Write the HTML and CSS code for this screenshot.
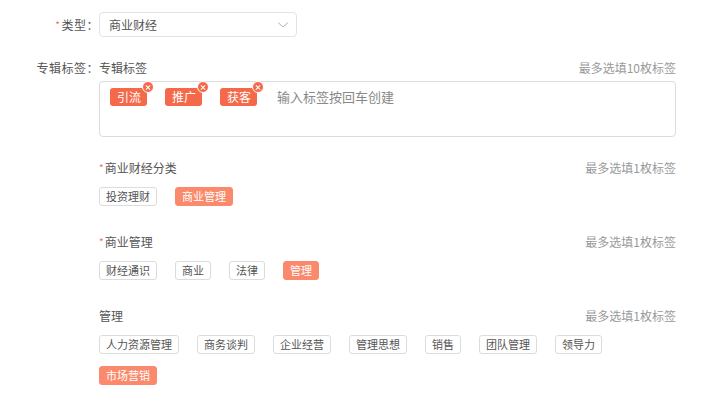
FILE: index.html
```html
<!DOCTYPE html>
<html lang="zh-CN">
<head>
    <meta charset="UTF-8">
    <meta name="viewport" content="width=device-width, initial-scale=1.0">
    <title>专辑设置</title>
    <link rel="stylesheet" href="styles.css">
</head>

<body>
    <div class="form-container">
        <!-- 类型 -->
        <div class="form-row row-type">
            <div class="form-label"><span class="required">*</span>类型：</div>
            <div class="form-control">
                <div class="select-box">
                    <span>商业财经</span>
                    <svg class="select-arrow" width="12" height="8" viewBox="0 0 12 8">
                        <path d="M1 1.5 L6 6 L11 1.5" fill="none" stroke="#b5b5b5" stroke-width="1"/>
                    </svg>
                </div>
            </div>
        </div>

        <!-- 专辑标签 -->
        <div class="form-row row-tags">
            <div class="form-label">专辑标签：</div>
            <div class="form-control">
                <div class="field-head">
                    <span class="field-title">专辑标签</span>
                    <span class="field-hint">最多选填10枚标签</span>
                </div>
                <div class="tag-input">
                    <span class="edit-tag">引流<i class="tag-close"></i></span>
                    <span class="edit-tag">推广<i class="tag-close"></i></span>
                    <span class="edit-tag">获客<i class="tag-close"></i></span>
                    <span class="tag-placeholder">输入标签按回车创建</span>
                </div>

                <div class="tag-group">
                    <div class="field-head">
                        <span class="field-title"><span class="required">*</span>商业财经分类</span>
                        <span class="field-hint">最多选填1枚标签</span>
                    </div>
                    <div class="tag-list">
                        <span class="tag">投资理财</span>
                        <span class="tag active">商业管理</span>
                    </div>
                </div>

                <div class="tag-group">
                    <div class="field-head">
                        <span class="field-title"><span class="required">*</span>商业管理</span>
                        <span class="field-hint">最多选填1枚标签</span>
                    </div>
                    <div class="tag-list">
                        <span class="tag">财经通识</span>
                        <span class="tag">商业</span>
                        <span class="tag">法律</span>
                        <span class="tag active">管理</span>
                    </div>
                </div>

                <div class="tag-group">
                    <div class="field-head">
                        <span class="field-title">管理</span>
                        <span class="field-hint">最多选填1枚标签</span>
                    </div>
                    <div class="tag-list">
                        <span class="tag">人力资源管理</span>
                        <span class="tag">商务谈判</span>
                        <span class="tag">企业经营</span>
                        <span class="tag">管理思想</span>
                        <span class="tag">销售</span>
                        <span class="tag">团队管理</span>
                        <span class="tag">领导力</span>
                        <span class="tag active">市场营销</span>
                    </div>
                </div>
            </div>
        </div>
    </div>
</body>
</html>
```

FILE: styles.css
```css
/* General body styling */
body {
    font-family: "Microsoft YaHei", "Noto Sans CJK SC", "Noto Sans", sans-serif;
    margin: 0;
    padding: 0;
    background-color: #fff;
    color: #555;
    font-size: 12px;
}

.form-container {
    width: 676px;
    padding-top: 12px;
}

/* Rows: label column + control column */
.form-row {
    display: flex;
}

.form-label {
    width: 99px;
    flex-shrink: 0;
    text-align: right;
    line-height: 16px;
    color: #555;
    letter-spacing: 0.5px;
}

.form-control {
    flex: 1;
}

.required {
    color: #f56c6c;
    font-size: 10px;
    vertical-align: top;
    margin-right: 1px;
}

/* Select */
.row-type .form-label {
    line-height: 25px;
}

.select-box {
    width: 198px;
    height: 25px;
    box-sizing: border-box;
    border: 1px solid #e3e3e3;
    border-radius: 4px;
    display: flex;
    align-items: center;
    justify-content: space-between;
    padding: 0 7px 0 9px;
    color: #555;
}

.row-tags {
    margin-top: 23px;
}

/* Field header: title + hint */
.field-head {
    display: flex;
    justify-content: space-between;
    line-height: 16px;
}

.field-hint {
    color: #999;
}

/* Editable tag box */
.tag-input {
    margin-top: 5px;
    height: 56px;
    box-sizing: border-box;
    border: 1px solid #dcdcdc;
    border-radius: 4px;
    padding: 6px 10px;
    display: flex;
    align-items: flex-start;
    gap: 18px;
}

.edit-tag {
    position: relative;
    background-color: #f5694a;
    color: #fff;
    height: 18px;
    line-height: 18px;
    padding: 0 6px 0 7px;
    border-radius: 3px;
}

.tag-close {
    position: absolute;
    top: -7px;
    right: -7px;
    width: 12px;
    height: 12px;
    box-sizing: border-box;
    border-radius: 50%;
    background-color: #f5694a;
    border: 1px solid #fff;
}

.tag-close::before,
.tag-close::after {
    content: "";
    position: absolute;
    left: 2px;
    top: 4.5px;
    width: 6px;
    height: 1px;
    background-color: #fff;
    transform: rotate(45deg);
}

.tag-close::after {
    transform: rotate(-45deg);
}

.tag-placeholder {
    color: #888;
    font-size: 13px;
    line-height: 18px;
    margin-left: 2px;
}

/* Tag groups */
.tag-group {
    margin-top: 23px;
}

.tag-group + .tag-group {
    margin-top: 28px;
}

.tag-list {
    margin-top: 11px;
    display: flex;
    flex-wrap: wrap;
    column-gap: 18px;
    row-gap: 12px;
}

.tag {
    font-size: 11px;
    height: 19px;
    line-height: 17px;
    box-sizing: border-box;
    padding: 0 6px;
    border: 1px solid #dcdcdc;
    border-radius: 3px;
    color: #555;
    background-color: #fff;
}

.tag.active {
    background-color: #fb8a6d;
    border-color: #fb8a6d;
    color: #fff;
}
```
